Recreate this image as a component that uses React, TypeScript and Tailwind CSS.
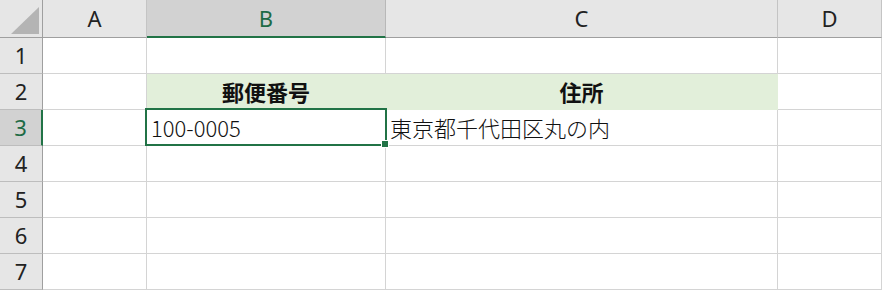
const cols = ['A', 'B', 'C', 'D'];
const rows = [1, 2, 3, 4, 5, 6, 7];

type CellProps = { row: number; col: string };

function Cell({ row, col }: CellProps) {
  const filled = row === 2 && (col === 'B' || col === 'C');
  const base = 'border-r border-b flex items-center overflow-visible whitespace-nowrap';
  const tone = filled ? 'bg-[#e2efda] border-[#e2efda]' : 'bg-white border-[#d4d4d4]';

  let content: React.ReactNode = null;
  if (row === 2 && col === 'B') content = '郵便番号';
  if (row === 2 && col === 'C') content = '住所';
  if (row === 3 && col === 'B') content = '100-0005';
  if (row === 3 && col === 'C') content = '東京都千代田区丸の内';

  const align = row === 2 ? 'justify-center font-bold' : 'justify-start pl-[4px] font-light';

  return (
    <div className={`${base} ${tone} ${align} text-[22px] text-[#111]`} style={{ fontFamily: '"Noto Sans CJK JP", sans-serif' }}>
      {content}
    </div>
  );
}

export default function App() {
  return (
    <div className="relative w-[882px] h-[290px] overflow-hidden bg-white" style={{ fontFamily: '"Noto Sans", "Noto Sans CJK JP", sans-serif' }}>
      <div className="grid grid-cols-[43px_104px_239px_392px_104px] grid-rows-[38px_repeat(7,36px)]">
        {/* corner */}
        <div className="bg-[#e6e6e6] border-r border-b border-[#9f9f9f] relative">
          <svg className="absolute left-0 top-0" width="43" height="38" viewBox="0 0 43 38">
            <polygon points="39,7 39,34 11,34" fill="#b4b4b4" />
          </svg>
        </div>
        {cols.map((c) => {
          const active = c === 'B';
          return (
            <div
              key={c}
              className={
                active
                  ? 'bg-[#d2d2d2] border-r border-r-[#b8b8b8] border-b-2 border-b-[#217346] flex items-center justify-center text-[22px] text-[#1e6b46]'
                  : 'bg-[#e6e6e6] border-r border-r-[#c4c4c4] border-b border-b-[#9f9f9f] flex items-center justify-center text-[22px] text-[#222]'
              }
            >
              {c}
            </div>
          );
        })}
        {rows.map((r) => (
          <div key={r} className="contents">
            <div
              className={
                r === 3
                  ? 'bg-[#d2d2d2] border-r-2 border-r-[#217346] border-b border-b-[#bdbdbd] flex items-center justify-center text-[22px] text-[#1e6b46]'
                  : 'bg-[#e6e6e6] border-r border-r-[#9f9f9f] border-b border-b-[#bdbdbd] flex items-center justify-center text-[22px] text-[#222]'
              }
            >
              {r}
            </div>
            {cols.map((c) => (
              <Cell key={c} row={r} col={c} />
            ))}
          </div>
        ))}
      </div>
      {/* active cell selection */}
      <div className="absolute left-[145px] top-[108px] w-[242px] h-[38px] border-2 border-[#217346] pointer-events-none" />
      <div className="absolute left-[381px] top-[140px] w-[8px] h-[8px] bg-[#217346] border border-white" />
    </div>
  );
}
